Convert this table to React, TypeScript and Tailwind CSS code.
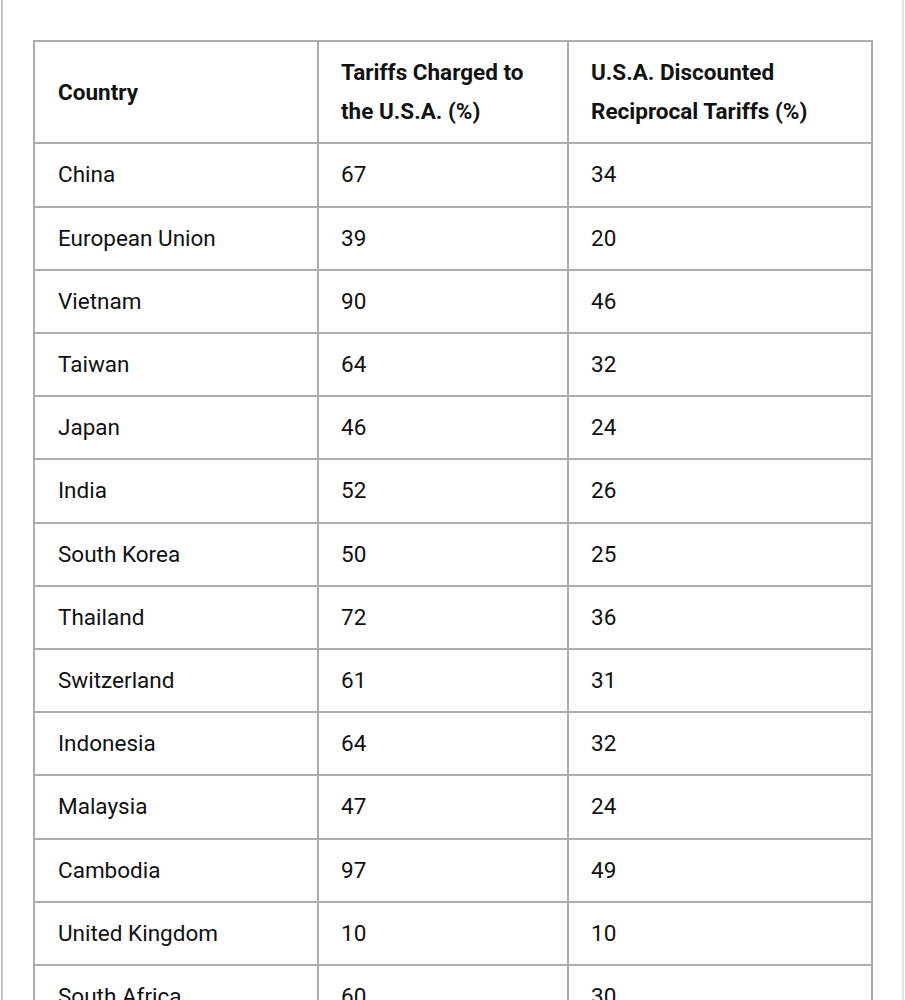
import React from "react";

const rows: [string, string, string][] = [
  ["China", "67", "34"],
  ["European Union", "39", "20"],
  ["Vietnam", "90", "46"],
  ["Taiwan", "64", "32"],
  ["Japan", "46", "24"],
  ["India", "52", "26"],
  ["South Korea", "50", "25"],
  ["Thailand", "72", "36"],
  ["Switzerland", "61", "31"],
  ["Indonesia", "64", "32"],
  ["Malaysia", "47", "24"],
  ["Cambodia", "97", "49"],
  ["United Kingdom", "10", "10"],
  ["South Africa", "60", "30"],
  ["Brazil", "10", "10"],
];

export default function App() {
  return (
    <div className="w-[905px] h-[1000px] overflow-hidden bg-white flex">
      <div className="w-[1px] shrink-0 bg-white" />
      <div className="w-[2px] shrink-0 bg-[#c4c4c4]" />
      <div
        className="flex-1 pt-[40px] pl-[30px] text-[#111111] text-[22.5px] leading-[39.2px]"
        style={{ fontFamily: "Roboto, 'Noto Sans', Arial, sans-serif" }}
      >
        <table className="table-fixed border-collapse w-[838px] border-2 border-[#adadad]">
          <colgroup>
            <col className="w-[284px]" />
            <col className="w-[250px]" />
            <col className="w-[304px]" />
          </colgroup>
          <thead>
            <tr>
              <th className="border-2 border-[#adadad] text-left font-bold pl-[23px] pr-4 py-[11px] align-middle">
                Country
              </th>
              <th className="border-2 border-[#adadad] text-left font-bold pl-[22px] pr-4 py-[11px] align-middle">
                Tariffs Charged to the U.S.A. (%)
              </th>
              <th className="border-2 border-[#adadad] text-left font-bold pl-[22px] pr-4 py-[11px] align-middle">
                U.S.A. Discounted Reciprocal Tariffs (%)
              </th>
            </tr>
          </thead>
          <tbody>
            {rows.map(([c, a, b]) => (
              <tr key={c}>
                <td className="border-2 border-[#adadad] pl-[23px] py-[11px]">{c}</td>
                <td className="border-2 border-[#adadad] pl-[22px] py-[11px]">{a}</td>
                <td className="border-2 border-[#adadad] pl-[22px] py-[11px]">{b}</td>
              </tr>
            ))}
          </tbody>
        </table>
      </div>
      <div className="w-[2px] shrink-0 bg-[#e4e4e4]" />
      <div className="w-[1px] shrink-0 bg-white" />
    </div>
  );
}
